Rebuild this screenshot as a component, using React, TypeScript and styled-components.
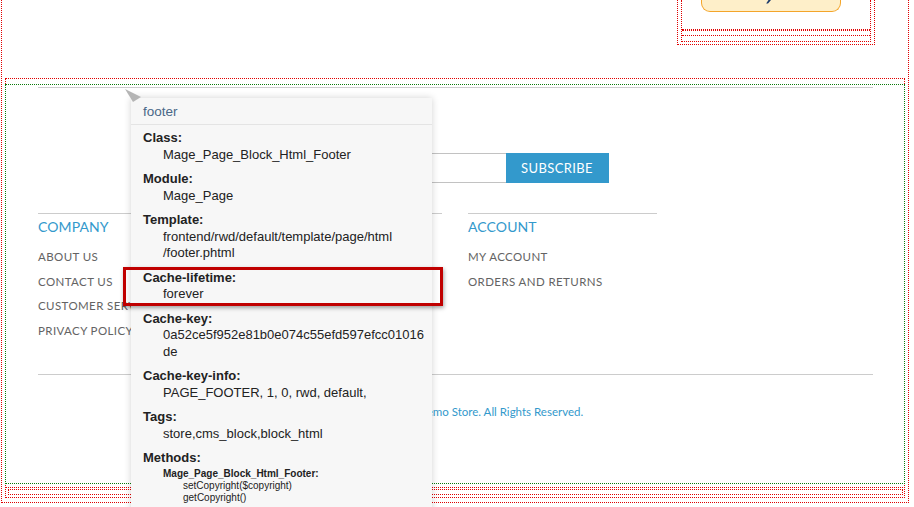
import React from "react";
import styled, { createGlobalStyle } from "styled-components";

const Global = createGlobalStyle`
  html, body { margin: 0; padding: 0; overflow: hidden; background: #fff; }
  body { font-family: "Lato", "Liberation Sans", sans-serif; }
  * { box-sizing: border-box; }
`;

const Root = styled.div`
  position: relative;
  width: 914px;
  height: 507px;
  overflow: hidden;
`;

const Page = styled.div`
  margin-left: 1px;
  width: 908px;
  border: 1px dotted #e00000;
  border-top: none;
  padding-bottom: 4px;
`;

const TopArea = styled.div`
  height: 78px;
  display: flex;
  justify-content: flex-end;
  align-items: flex-start;
  padding-right: 33px;
`;

const PayBox = styled.div`
  width: 198px;
  border: 1px dotted #e00000;
  border-top: none;
  padding: 0 3px 2px 3px;
`;

const PayInner = styled.div`
  border: 1px dotted #e00000;
  border-top: none;
  padding-bottom: 5px;
`;

const PayButtonArea = styled.div`
  position: relative;
  height: 30px;
  border-bottom: 1px dotted #e00000;
  padding-left: 19px;
`;

const PayButton = styled.div`
  width: 140px;
  height: 12px;
  background: #feefc9;
  border: 1px solid #f4a52a;
  border-top: none;
  border-radius: 0 0 9px 9px;
  position: relative;
`;

const Descender = styled.svg`
  position: absolute;
  left: 62px;
  top: 0;
`;

const PaySlot = styled.div`
  height: 6px;
  border-top: 1px dotted #e00000;
  border-bottom: 1px dotted #e00000;
`;

const FooterContainer = styled.div`
  margin: 0 3px;
  border: 1px dotted #e00000;
  padding: 5px 0 2px 0;
`;

const FooterBox = styled.div`
  margin: 0 -1px;
  height: 400px;
  border: 1px dotted #0a7a0a;
  padding: 0 31px 0 32px;
`;

const FooterInner = styled.div`
  margin-top: 2px;
  border-top: 1px solid #cccccc;
`;

const NewsletterForm = styled.div`
  margin-top: 65px;
  display: flex;
  justify-content: center;
`;

const NewsInput = styled.div`
  width: 203px;
  height: 30px;
  border: 1px solid #c2c2c2;
  border-right: none;
`;

const SubscribeButton = styled.div`
  width: 103px;
  height: 30px;
  background: #3399cc;
  color: #fff;
  font-size: 13px;
  letter-spacing: 0.4px;
  display: flex;
  align-items: center;
  justify-content: center;
`;

const Columns = styled.div`
  margin-top: 30px;
  display: grid;
  grid-template-columns: repeat(3, 189px);
  column-gap: 26px;
  height: 130px;
`;

const Column = styled.div`
  border-top: 1px solid #cccccc;
`;

const ColumnTitle = styled.div`
  font-size: 14px;
  line-height: 26px;
  color: #3399cc;
  letter-spacing: 0.1px;
  min-height: 26px;
`;

const LinkList = styled.div`
  padding-top: 5px;
  display: flex;
  flex-direction: column;
`;

const FooterLink = styled.div`
  font-size: 11.5px;
  line-height: 24.5px;
  color: #636363;
  letter-spacing: 0.4px;
  white-space: nowrap;
`;

const Divider = styled.div`
  margin-top: 31px;
  border-top: 1px solid #cccccc;
`;

const Copyright = styled.div`
  padding-top: 27px;
  text-align: center;
  font-size: 11.5px;
  line-height: 20px;
  color: #3399cc;
`;

const LowerBlock = styled.div`
  margin: 3px -1px 0 -1px;
  border-top: 1px dotted #e00000;
  padding: 1px 2px 0 3px;
`;

const LowerSlot = styled.div`
  height: 6px;
  border: 1px dotted #e00000;
`;

const Tooltip = styled.div`
  position: absolute;
  left: 131px;
  top: 98px;
  width: 301px;
  height: 420px;
  background: #f7f7f7;
  box-shadow: 0 0 7px rgba(0, 0, 0, 0.18);
  font-family: "Liberation Sans", Arial, sans-serif;
  color: #222;
`;

const TooltipArrow = styled.svg`
  position: absolute;
  left: -7px;
  top: -10px;
`;

const TooltipHeader = styled.div`
  height: 27px;
  line-height: 27px;
  padding: 0 12px;
  font-size: 13.5px;
  color: #4a6887;
  border-bottom: 1px solid #e4e4e4;
`;

const TooltipBody = styled.div`
  padding: 5px 12px 0 12px;
`;

const Group = styled.div`
  margin-bottom: 8px;
`;

const Label = styled.div`
  font-weight: bold;
  font-size: 13px;
  line-height: 16.5px;
`;

const Value = styled.div`
  padding-left: 20px;
  font-size: 13px;
  line-height: 16.5px;
  white-space: nowrap;
`;

const MethodClass = styled.div`
  padding-left: 20px;
  font-weight: bold;
  font-size: 10px;
  line-height: 12px;
  margin-top: 1px;
`;

const MethodName = styled.div`
  padding-left: 40px;
  font-size: 10px;
  line-height: 12px;
`;

const Highlight = styled.div`
  position: absolute;
  left: 123px;
  top: 267px;
  width: 320px;
  height: 39px;
  border: 3px solid #c00000;
  box-shadow: 1px 2px 4px rgba(0, 0, 0, 0.35);
`;

const groups: { label: string; values: string[] }[] = [
  { label: "Class:", values: ["Mage_Page_Block_Html_Footer"] },
  { label: "Module:", values: ["Mage_Page"] },
  { label: "Template:", values: ["frontend/rwd/default/template/page/html", "/footer.phtml"] },
  { label: "Cache-lifetime:", values: ["forever"] },
  { label: "Cache-key:", values: ["0a52ce5f952e81b0e074c55efd597efcc01016", "de"] },
  { label: "Cache-key-info:", values: ["PAGE_FOOTER, 1, 0, rwd, default,"] },
  { label: "Tags:", values: ["store,cms_block,block_html"] },
];

const columns: { title: string; links: string[] }[] = [
  { title: "COMPANY", links: ["About Us", "Contact Us", "Customer Service", "Privacy Policy"] },
  { title: "", links: [] },
  { title: "ACCOUNT", links: ["My Account", "Orders and Returns"] },
];

export default function App() {
  return (
    <>
      <Global />
      <Root>
        <Page>
          <TopArea>
            <PayBox>
              <PayInner>
                <PayButtonArea>
                  <PayButton>
                    <Descender width="8" height="5" viewBox="0 0 8 5">
                      <path d="M4.5 0 L7 0 L4 3.6 L2.2 3.6 Z" fill="#1b3a6b" />
                    </Descender>
                  </PayButton>
                </PayButtonArea>
                <PaySlot />
              </PayInner>
            </PayBox>
          </TopArea>
          <FooterContainer>
            <FooterBox>
              <FooterInner>
                <NewsletterForm>
                  <NewsInput />
                  <SubscribeButton>SUBSCRIBE</SubscribeButton>
                </NewsletterForm>
                <Columns>
                  {columns.map((c, i) => (
                    <Column key={i}>
                      <ColumnTitle>{c.title}</ColumnTitle>
                      <LinkList>
                        {c.links.map((l) => (
                          <FooterLink key={l}>{l.toUpperCase()}</FooterLink>
                        ))}
                      </LinkList>
                    </Column>
                  ))}
                </Columns>
                <Divider />
                <Copyright>© 2015 Magento Demo Store. All Rights Reserved.</Copyright>
              </FooterInner>
            </FooterBox>
            <LowerBlock>
              <LowerSlot />
            </LowerBlock>
          </FooterContainer>
        </Page>
        <Tooltip>
          <TooltipArrow width="18" height="14" viewBox="0 0 18 14">
            <polygon points="1,1 17,9 9,14" fill="#b5b5b5" />
          </TooltipArrow>
          <TooltipHeader>footer</TooltipHeader>
          <TooltipBody>
            {groups.map((g) => (
              <Group key={g.label}>
                <Label>{g.label}</Label>
                {g.values.map((v) => (
                  <Value key={v}>{v}</Value>
                ))}
              </Group>
            ))}
            <Group>
              <Label>Methods:</Label>
              <MethodClass>Mage_Page_Block_Html_Footer:</MethodClass>
              <MethodName>setCopyright($copyright)</MethodName>
              <MethodName>getCopyright()</MethodName>
            </Group>
          </TooltipBody>
        </Tooltip>
        <Highlight />
      </Root>
    </>
  );
}
